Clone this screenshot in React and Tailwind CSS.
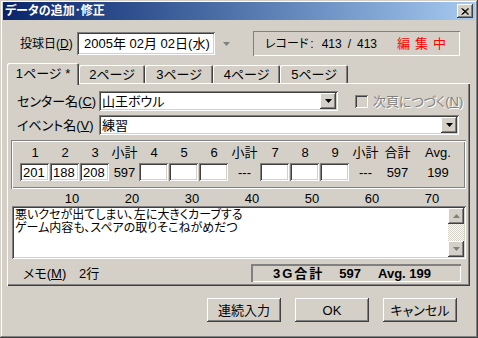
import React from "react";

const raised =
  "shadow-[inset_-1px_-1px_#404040,inset_1px_1px_#ffffff,inset_-2px_-2px_#808080,inset_2px_2px_#d4d0c8]";
const sunken =
  "shadow-[inset_1px_1px_#808080,inset_-1px_-1px_#ffffff,inset_2px_2px_#404040,inset_-2px_-2px_#d4d0c8]";

const DownArrow = ({ color = "#000" }) => (
  <svg width="7" height="4" viewBox="0 0 7 4">
    <polygon points="0,0 7,0 3.5,4" fill={color} />
  </svg>
);

const UpArrow = ({ color = "#000" }) => (
  <svg width="7" height="4" viewBox="0 0 7 4">
    <polygon points="0,4 7,4 3.5,0" fill={color} />
  </svg>
);

const Mn = ({ children }) => <span className="underline underline-offset-1">{children}</span>;

const Combo = ({ width, text }) => (
  <div className={`flex h-[20px] items-center bg-white pl-[2px] pr-[2px] ${sunken} ${width}`}>
    <span className="flex-1 pl-[1px] text-[13px] leading-none text-black">{text}</span>
    <div className={`flex h-[16px] w-[16px] items-center justify-center bg-[#d4d0c8] ${raised}`}>
      <DownArrow />
    </div>
  </div>
);

const Cell = ({ value }) => (
  <div className={`flex h-[18px] w-[29px] items-center bg-white pl-[3px] text-[13px] leading-none ${sunken}`}>
    {value}
  </div>
);

const columns = [
  { head: "1", w: "w-[30px]", cell: "201" },
  { head: "2", w: "w-[30px]", cell: "188" },
  { head: "3", w: "w-[30px]", cell: "208" },
  { head: "小計", w: "w-[29px]", text: "597" },
  { head: "4", w: "w-[30px]", cell: "" },
  { head: "5", w: "w-[30px]", cell: "" },
  { head: "6", w: "w-[30px]", cell: "" },
  { head: "小計", w: "w-[31px]", text: "---" },
  { head: "7", w: "w-[30px]", cell: "" },
  { head: "8", w: "w-[30px]", cell: "" },
  { head: "9", w: "w-[30px]", cell: "" },
  { head: "小計", w: "w-[31px]", text: "---" },
  { head: "合計", w: "w-[33px]", text: "597" },
  { head: "Avg.", w: "w-[48px]", text: "199" },
];

const tabs = [
  { label: "1ページ *", w: "w-[72px]", active: true },
  { label: "2ページ", w: "w-[66px]" },
  { label: "3ページ", w: "w-[68px]" },
  { label: "4ページ", w: "w-[67px]" },
  { label: "5ページ", w: "w-[68px]" },
];

export default function App() {
  return (
    <div
      className={`flex h-[338px] w-[478px] flex-col whitespace-nowrap bg-[#d4d0c8] px-[3px] pt-[2px] text-[12px] text-black font-['Liberation_Sans','Noto_Sans_CJK_JP',sans-serif] [font-feature-settings:'palt'] shadow-[inset_-1px_-1px_#404040,inset_1px_1px_#d4d0c8,inset_-2px_-2px_#808080,inset_2px_2px_#ffffff]`}
    >
      {/* title bar */}
      <div className="flex h-[18px] items-center bg-linear-to-r from-[#0a246a] to-[#a6caf0] pl-[2px] pr-[2px]">
        <span className="flex-1 text-[12px] font-bold leading-none text-white">データの追加･修正</span>
        <div className={`flex h-[14px] w-[16px] items-center justify-center bg-[#d4d0c8] ${raised}`}>
          <svg width="8" height="7" viewBox="0 0 8 7">
            <path d="M0.5 0.5 L7 6.5 M1.5 0.5 L8 6.5 M7 0.5 L0.5 6.5 M8 0.5 L1.5 6.5" stroke="#000" strokeWidth="1" />
          </svg>
        </div>
      </div>

      {/* date row */}
      <div className="mt-[11px] flex h-[25px] items-center">
        <span className="ml-[17px] w-[57px] text-[12px] leading-none">
          投球日(<Mn>D</Mn>)
        </span>
        <div className={`flex h-[23px] w-[138px] items-center bg-white pl-[7px] text-[13px] leading-none ${sunken}`}>
          2005年 02月 02日(水)
        </div>
        <div className="ml-[8px]">
          <DownArrow color="#808080" />
        </div>
        <div className="ml-[23px] flex h-[25px] w-[207px] items-center pl-[12px] text-[12px] leading-none shadow-[inset_1px_1px_#808080,inset_-1px_-1px_#ffffff]">
          <span>レコード</span>
          <span className="ml-[2px]">:</span>
          <span className="ml-[8px]">413</span>
          <span className="ml-[6px]">/</span>
          <span className="ml-[6px]">413</span>
          <span className="ml-[20px] text-[13px] tracking-[5px] text-[#ff0000]">編集中</span>
        </div>
      </div>

      {/* tabs */}
      <div className="mt-[7px] ml-[4px] flex h-[20px] items-end">
        {tabs.map((t) =>
          t.active ? (
            <div
              key={t.label}
              className={`relative z-10 -mb-[2px] flex h-[22px] items-start justify-center rounded-t-[2px] bg-[#d4d0c8] pt-[4px] text-[13px] leading-none shadow-[inset_1px_1px_#ffffff,inset_-1px_0_#404040,inset_-2px_0_#808080] ${t.w}`}
            >
              {t.label}
            </div>
          ) : (
            <div
              key={t.label}
              className={`flex h-[18px] items-center justify-center rounded-t-[2px] text-[13px] leading-none shadow-[inset_1px_1px_#ffffff,inset_-1px_0_#404040,inset_-2px_0_#808080] ${t.w}`}
            >
              {t.label}
            </div>
          )
        )}
      </div>

      {/* panel */}
      <div
        className={`ml-[4px] flex h-[203px] w-[463px] flex-col shadow-[inset_1px_1px_#ffffff,inset_-1px_-1px_#404040,inset_-2px_-2px_#808080]`}
      >
        <div className="mt-[8px] flex items-center">
          <span className="ml-[10px] w-[82px] text-[13px] leading-none">
            センター名(<Mn>C</Mn>)
          </span>
          <Combo width="w-[239px]" text="山王ボウル" />
          <div className="ml-[17px] h-[13px] w-[13px] shadow-[inset_1px_1px_#808080,inset_-1px_-1px_#ffffff,inset_2px_2px_#404040]" />
          <span className="ml-[5px] text-[13px] leading-none text-[#808080] [text-shadow:1px_1px_#ffffff]">
            次頁につづく(<Mn>N</Mn>)
          </span>
        </div>

        <div className="mt-[4px] flex items-center">
          <span className="ml-[10px] w-[82px] text-[13px] leading-none">
            イベント名(<Mn>V</Mn>)
          </span>
          <Combo width="w-[360px]" text="練習" />
        </div>

        {/* score group */}
        <div className="mt-[5px] ml-[4px] flex h-[49px] w-[455px] pl-[9px] shadow-[inset_1px_1px_#808080,inset_-1px_-1px_#ffffff,inset_2px_2px_#ffffff,inset_-2px_-2px_#808080]">
          {columns.map((c, i) => (
            <div key={i} className={`flex flex-col ${c.w}`}>
              <div className="mt-[5px] flex h-[14px] items-center justify-center text-[13px] leading-none">
                {c.head}
              </div>
              <div className="mt-[4px] flex h-[18px] items-center justify-center text-[13px] leading-none">
                {c.cell !== undefined ? <div className="-ml-[1px] self-start"><Cell value={c.cell} /></div> : c.text}
              </div>
            </div>
          ))}
        </div>

        {/* ruler */}
        <div className="mt-[2px] ml-[35px] flex h-[14px] items-center">
          {["10", "20", "30", "40", "50", "60", "70"].map((n) => (
            <span key={n} className="w-[60px] text-center text-[13px] leading-none">
              {n}
            </span>
          ))}
        </div>

        {/* memo text */}
        <div className={`mt-[1px] ml-[5px] flex h-[53px] w-[454px] bg-white p-[2px] ${sunken}`}>
          <div className="flex-1 pl-[1px] pt-[1px] text-[12px] leading-[13px]">
            <div>悪いクセが出てしまい、左に大きくカーブする</div>
            <div>ゲーム内容も、スペアの取りそこねがめだつ</div>
          </div>
          <div className="flex w-[16px] flex-col">
            <div className={`flex h-[16px] items-center justify-center bg-[#d4d0c8] ${raised}`}>
              <UpArrow color="#808080" />
            </div>
            <div className="flex-1 bg-[repeating-conic-gradient(#ffffff_0_25%,#d4d0c8_0_50%)] bg-[length:2px_2px]" />
            <div className={`flex h-[16px] items-center justify-center bg-[#d4d0c8] ${raised}`}>
              <DownArrow color="#808080" />
            </div>
          </div>
        </div>

        {/* memo row */}
        <div className="mt-[5px] flex h-[18px] items-center">
          <span className="ml-[16px] w-[56px] text-[13px] leading-none">
            メモ(<Mn>M</Mn>)
          </span>
          <span className="text-[13px] leading-none">2行</span>
          <div className="ml-auto mr-[9px] flex h-[18px] w-[210px] items-center pl-[22px] text-[13px] font-bold leading-none shadow-[inset_1px_1px_#808080,inset_2px_2px_#808080,inset_-1px_-1px_#ffffff]">
            <span className="tracking-[2px]">3G合計</span>
            <span className="ml-[15px]">597</span>
            <span className="ml-[17px]">Avg. 199</span>
          </div>
        </div>
      </div>

      {/* buttons */}
      <div className="mt-[12px] mr-[18px] flex justify-end gap-[14px]">
        {["連続入力", "OK", "キャンセル"].map((b) => (
          <div
            key={b}
            className={`flex h-[24px] w-[74px] items-center justify-center text-[13px] leading-none ${raised}`}
          >
            {b}
          </div>
        ))}
      </div>
    </div>
  );
}
